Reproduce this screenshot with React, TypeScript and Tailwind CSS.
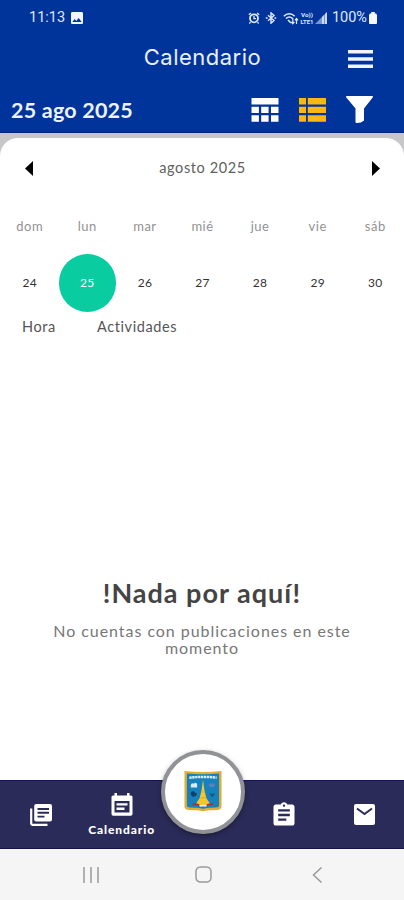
import { MdAssignment, MdImage } from 'react-icons/md'

interface Day {
  name: string
  num: number
}

const days: Day[] = [
  { name: 'dom', num: 24 },
  { name: 'lun', num: 25 },
  { name: 'mar', num: 26 },
  { name: 'mié', num: 27 },
  { name: 'jue', num: 28 },
  { name: 'vie', num: 29 },
  { name: 'sáb', num: 30 },
]

const selected = 25

function StatusBar() {
  return (
    <div className="flex h-[34px] items-center justify-between pt-[2px] pr-[27px] pl-[29px] font-['Roboto',sans-serif] text-[#dfe8ff]">
      <div className="flex items-center gap-[5px]">
        <span className="text-[14.5px]">11:13</span>
        <MdImage size={16} className="-ml-px text-[#f1f5ff]" />
      </div>
      <div className="flex items-center">
        <svg width="12" height="12" viewBox="0 0 12 12" className="mr-[5px]" fill="none" stroke="currentColor">
          <circle cx="6" cy="6.3" r="4" strokeWidth="1.8" />
          <path d="M6 4v2.6h2M.8 2.8L3 .9M11.2 2.8L9 .9M2.5 10.2L1.3 11.5M9.5 10.2l1.2 1.300" strokeWidth="1.3" />
        </svg>
        <svg width="12" height="12" viewBox="0 0 12 12" className="mr-[6px]" fill="none" stroke="currentColor">
          <path d="M3 3.2l6 5.4-3 2.6V.8l3 2.6-6 5.4" strokeWidth="1.4" />
          <path d="M.8 6h1.8M9.4 6h1.8" strokeWidth="1.6" />
        </svg>
        <svg width="16" height="13" viewBox="0 0 16 13" className="mr-[1px]" fill="none" stroke="currentColor">
          <path d="M.8 4.2C4 .8 8.500.8 11.7 4.2M3 6.6c2-2 4.6-2 6.6 0" strokeWidth="1.5" />
          <path d="M5 8l3 3" strokeWidth="1.6" />
          <path d="M9.8 6v5.5M8.2 9.8l1.6 2 1.6-2M13.5 12V6.5M12 8.4l1.5-1.9L15 8.4" strokeWidth="1.2" />
        </svg>
        <svg width="14" height="16" viewBox="0 0 14 16" className="mr-[1px]" fill="currentColor">
          <text x="1" y="7" fontSize="6" fontWeight="700" textLength="12" lengthAdjust="spacingAndGlyphs">Vo))</text>
          <text x="0.5" y="13.5" fontSize="6" fontWeight="700" textLength="13" lengthAdjust="spacingAndGlyphs">LTE1</text>
        </svg>
        <svg width="12" height="12" viewBox="0 0 12 12" className="mr-[5px]">
          <path d="M0 12L12 0v12z" fill="#dfe8ff" opacity="0.55" />
          <path d="M7 5l2-2v9H7zM10 2l2-2v12h-2z" fill="#dfe8ff" opacity="0.8" />
        </svg>
        <span className="text-[14.5px]">100%</span>
        <svg width="8" height="12" viewBox="0 0 9 12" className="ml-[2px]" preserveAspectRatio="none">
          <path d="M2.5 0h4v1.5H8L9 3v8a1 1 0 0 1-1 1H1a1 1 0 0 1-1-1V3l1-1.5h1.5z" fill="#f4f7ff" />
        </svg>
      </div>
    </div>
  )
}

function Header() {
  return (
    <header className="h-[133px] border-b border-[#002878] bg-[#00349b] text-white">
      <StatusBar />
      <div className="grid h-[50px] grid-cols-[56px_1fr_56px] items-center">
        <h1 className="col-start-2 -mt-[3px] pl-[1px] text-center font-['Inter',sans-serif] text-[22px] leading-[45px] tracking-[0.5px] text-[#e9efff]">Calendario</h1>
        <svg width="25" height="18" viewBox="0 0 25 18" fill="#f1f4ff">
          <path d="M0 0h25v3.4H0zM0 7.3h25v3.4H0zM0 14.6h25V18H0z" />
        </svg>
      </div>
      <div className="flex h-[48px] items-center justify-between pt-[3px] pr-[31px] pl-[11px]">
        <span className="pt-[2px] font-['Lato',sans-serif] text-[21.5px] font-bold tracking-[0.2px] text-[#edf2ff]">25 ago 2025</span>
        <div className="flex items-center gap-[20px]">
          <svg width="28" height="24" viewBox="0 0 28 24" fill="#fff">
            <path d="M.5 0h27v6.5H.5zM.5 8.7h7.4v6.2H.5zM10.2 8.7h7.4v6.2h-7.4zM20 8.7h7.5v6.2H20zM.5 17.2h7.4v6.6H.5zM10.2 17.2h7.4v6.6h-7.4zM20 17.2h7.5v6.6H20z" />
          </svg>
          <svg width="27" height="24" viewBox="0 0 27 24" fill="#fcb713">
            <path d="M0 0h7v6.5H0zM8.8 0H27v6.5H8.8zM0 8.7h7v6.2H0zM8.8 8.7H27v6.2H8.8zM0 17.2h7v6.6H0zM8.8 17.2H27v6.6H8.8z" />
          </svg>
          <svg width="27" height="28" viewBox="0 0 27 28" fill="#fff">
            <path d="M.8 0h25.4c.8 0 1 .9.5 1.5L18 12.5V24.5q-3 2.7-7.5 2.5-1 0-1-1V12.5L.3 1.5C-.2.9 0 0 .8 0z" />
          </svg>
        </div>
      </div>
    </header>
  )
}

function Week() {
  return (
    <div className="grid grid-cols-[repeat(7,57.6px)] justify-center pl-[1px] text-center">
      {days.map((d) => (
        <span key={d.name} className="h-[36px] text-[13px] leading-[16px] tracking-[0.5px] text-[#929292]">{d.name}</span>
      ))}
      {days.map((d) => (
        <span
          key={d.num}
          className={`h-[58px] rounded-full text-[12px] leading-[58px] tracking-[0.3px] ${d.num === selected ? 'bg-[#09cda0] text-white' : 'text-[#333]'}`}
        >
          {d.num}
        </span>
      ))}
    </div>
  )
}

// school crest inside the round center button
function Crest() {
  return (
    <svg width="38" height="42" viewBox="0 0 39 42" className="-mt-[2px] -ml-[1px]">
      <path d="M.5.5q19 2 38 0v36.500q0 3-4 3.500-10 0-15 1.200-5-1.200-15-1.200-4-.5-4-3.500z" fill="#dfae32" />
      <path d="M3 3q16.500 1.600 33 0v32.500q0 2.200-3 2.400-9 0-13.500 1.200-4.500-1.200-13.500-1.200-3-.2-3-2.400z" fill="#1681bd" />
      <path d="M5.500 7.300q14-1.500 28 0" fill="none" stroke="#d8edf5" strokeWidth="2.600" strokeDasharray="2.400 .6" />
      <path d="M19.5 9.500l1.500 11 2 8 4.500 6.500q-8 3-16 0l4.500-6.500 2-8z" fill="#f5c72c" />
      <path d="M18.500 22h2.500M17 28h5" stroke="#dca425" />
      <path d="M7 14.500q1-2 3-1 2-2 3.500.5v3.500H7z" fill="#d9e9f0" />
      <path d="M7 22l3-1 1.500 2 2 .5-1.500 3-3 .5-2-2z" fill="#123f68" />
      <path d="M25.500 14q3-2 6 0v2q-3 2-6 0z" fill="#5b83ba" />
      <path d="M26 23l3 1 3-1-2 4h-2z" fill="#205777" />
      <path d="M9 34.800q3.500-1 6.500 1M23.500 35.800q3.500-2 6.500-1" stroke="#a6313e" strokeWidth="2" fill="none" />
      <path d="M16 36.500q3.500-1 7 0" stroke="#e4f0f3" strokeWidth="1.600" fill="none" />
    </svg>
  )
}

function BottomNav() {
  return (
    <nav className="relative grid h-[69px] grid-cols-5 items-center border-y border-[#15134b] bg-[#2b2b59] text-white">
      <svg width="22" height="22" viewBox="0 0 22 22" className="mx-auto translate-x-px">
        <path d="M1.200 4.500v15q0 1.300 1.300 1.300h15" fill="none" stroke="#fff" strokeWidth="2.200" />
        <rect x="4.200" y="0" width="17.800" height="17.600" rx="2" fill="#fff" />
        <path d="M7.500 5h11.500M7.500 8.800h11.500M7.500 12.600h7" stroke="#2b2b59" strokeWidth="1.900" />
      </svg>
      <div className="flex flex-col items-center pt-[1px] pl-[1px]">
        <svg width="22" height="23" viewBox="0 0 22 23">
          <path d="M3.500 0H6v2.500h10V0h2.500v2.500H20q1.500 0 1.500 1.500v17q0 1.800-1.800 1.800H2.300Q.5 22.800.5 21V4q0-1.500 1.500-1.500h1.500z" fill="#fff" />
          <path d="M3.500 8h15v11.500h-15z" fill="#2b2b59" />
          <path d="M5.500 10.200h11v2.400h-11zM5.500 14.500h8V17h-8z" fill="#fff" />
        </svg>
        <span className="mt-[6px] font-['Lato',sans-serif] text-[12px] leading-[15px] font-black tracking-[0.9px]">Calendario</span>
      </div>
      <span />
      <MdAssignment size={28} className="mx-auto translate-x-px" />
      <svg width="21" height="21" viewBox="0 0 21 21" className="mx-auto translate-x-px">
        <rect width="21" height="21" rx="2" fill="#fff" />
        <path d="M3 4.5l7.5 5.5L18 4.5" fill="none" stroke="#2b2b59" strokeWidth="2" />
      </svg>
      <div className="absolute -top-[31px] left-[161px] grid h-[84px] w-[84px] place-items-center rounded-full border-[4px] border-[#919295] bg-white shadow-[0_2px_5px_rgba(0,0,0,0.35)]">
        <Crest />
      </div>
    </nav>
  )
}

function SystemNav() {
  return (
    <div className="flex h-[51px] items-center justify-between bg-[#f5f5f5] px-[82px]">
      <svg width="18" height="18" viewBox="0 0 18 18" stroke="#a0a0a0" strokeWidth="1.6">
        <path d="M2 1v16M9 1v16M16 1v16" />
      </svg>
      <svg width="17" height="17" viewBox="0 0 17 17" className="-ml-[5px]">
        <rect x="1" y="1" width="15" height="15" rx="4.5" fill="none" stroke="#999" strokeWidth="1.5" />
      </svg>
      <svg width="11" height="18" viewBox="0 0 11 18" fill="none" stroke="#999" strokeWidth="1.5" className="translate-x-px">
        <path d="M9.500 1.500L1.500 9l8 7.500" />
      </svg>
    </div>
  )
}

export default function App() {
  return (
    <div className="flex h-[900px] w-[404px] flex-col overflow-hidden bg-white font-['Lato',sans-serif]">
      <Header />
      <div className="flex flex-1 flex-col bg-[#c7c7c9] pt-[5px]">
        <main className="flex flex-1 flex-col rounded-t-[18px] bg-white">
          <div className="flex h-[60px] items-center justify-between pr-[24px] pl-[25px]">
            <svg width="8" height="15" viewBox="0 0 8 15"><path d="M8 0v15L0 7.5z" /></svg>
            <span className="text-[14.5px] tracking-[0.6px] text-[#606060]">agosto 2025</span>
            <svg width="8" height="15" viewBox="0 0 8 15"><path d="M0 0v15l8-7.5z" /></svg>
          </div>
          <div className="pt-[20px]">
            <Week />
          </div>
          <div className="flex pt-[5px] pl-[22px] text-[14.5px] leading-[20px] tracking-[0.6px] text-[#555]">
            <span className="w-[75px]">Hora</span>
            <span>Actividades</span>
          </div>
          <div className="mt-[238px] flex flex-col items-center text-center">
            <h2 className="text-[27px] leading-[36px] font-bold tracking-[1px] text-[#444]">!Nada por aquí!</h2>
            <p className="mt-[11px] w-[320px] text-[16px] leading-[17px] tracking-[0.95px] text-[#777]">No cuentas con publicaciones en este momento</p>
          </div>
        </main>
      </div>
      <BottomNav />
      <SystemNav />
    </div>
  )
}
